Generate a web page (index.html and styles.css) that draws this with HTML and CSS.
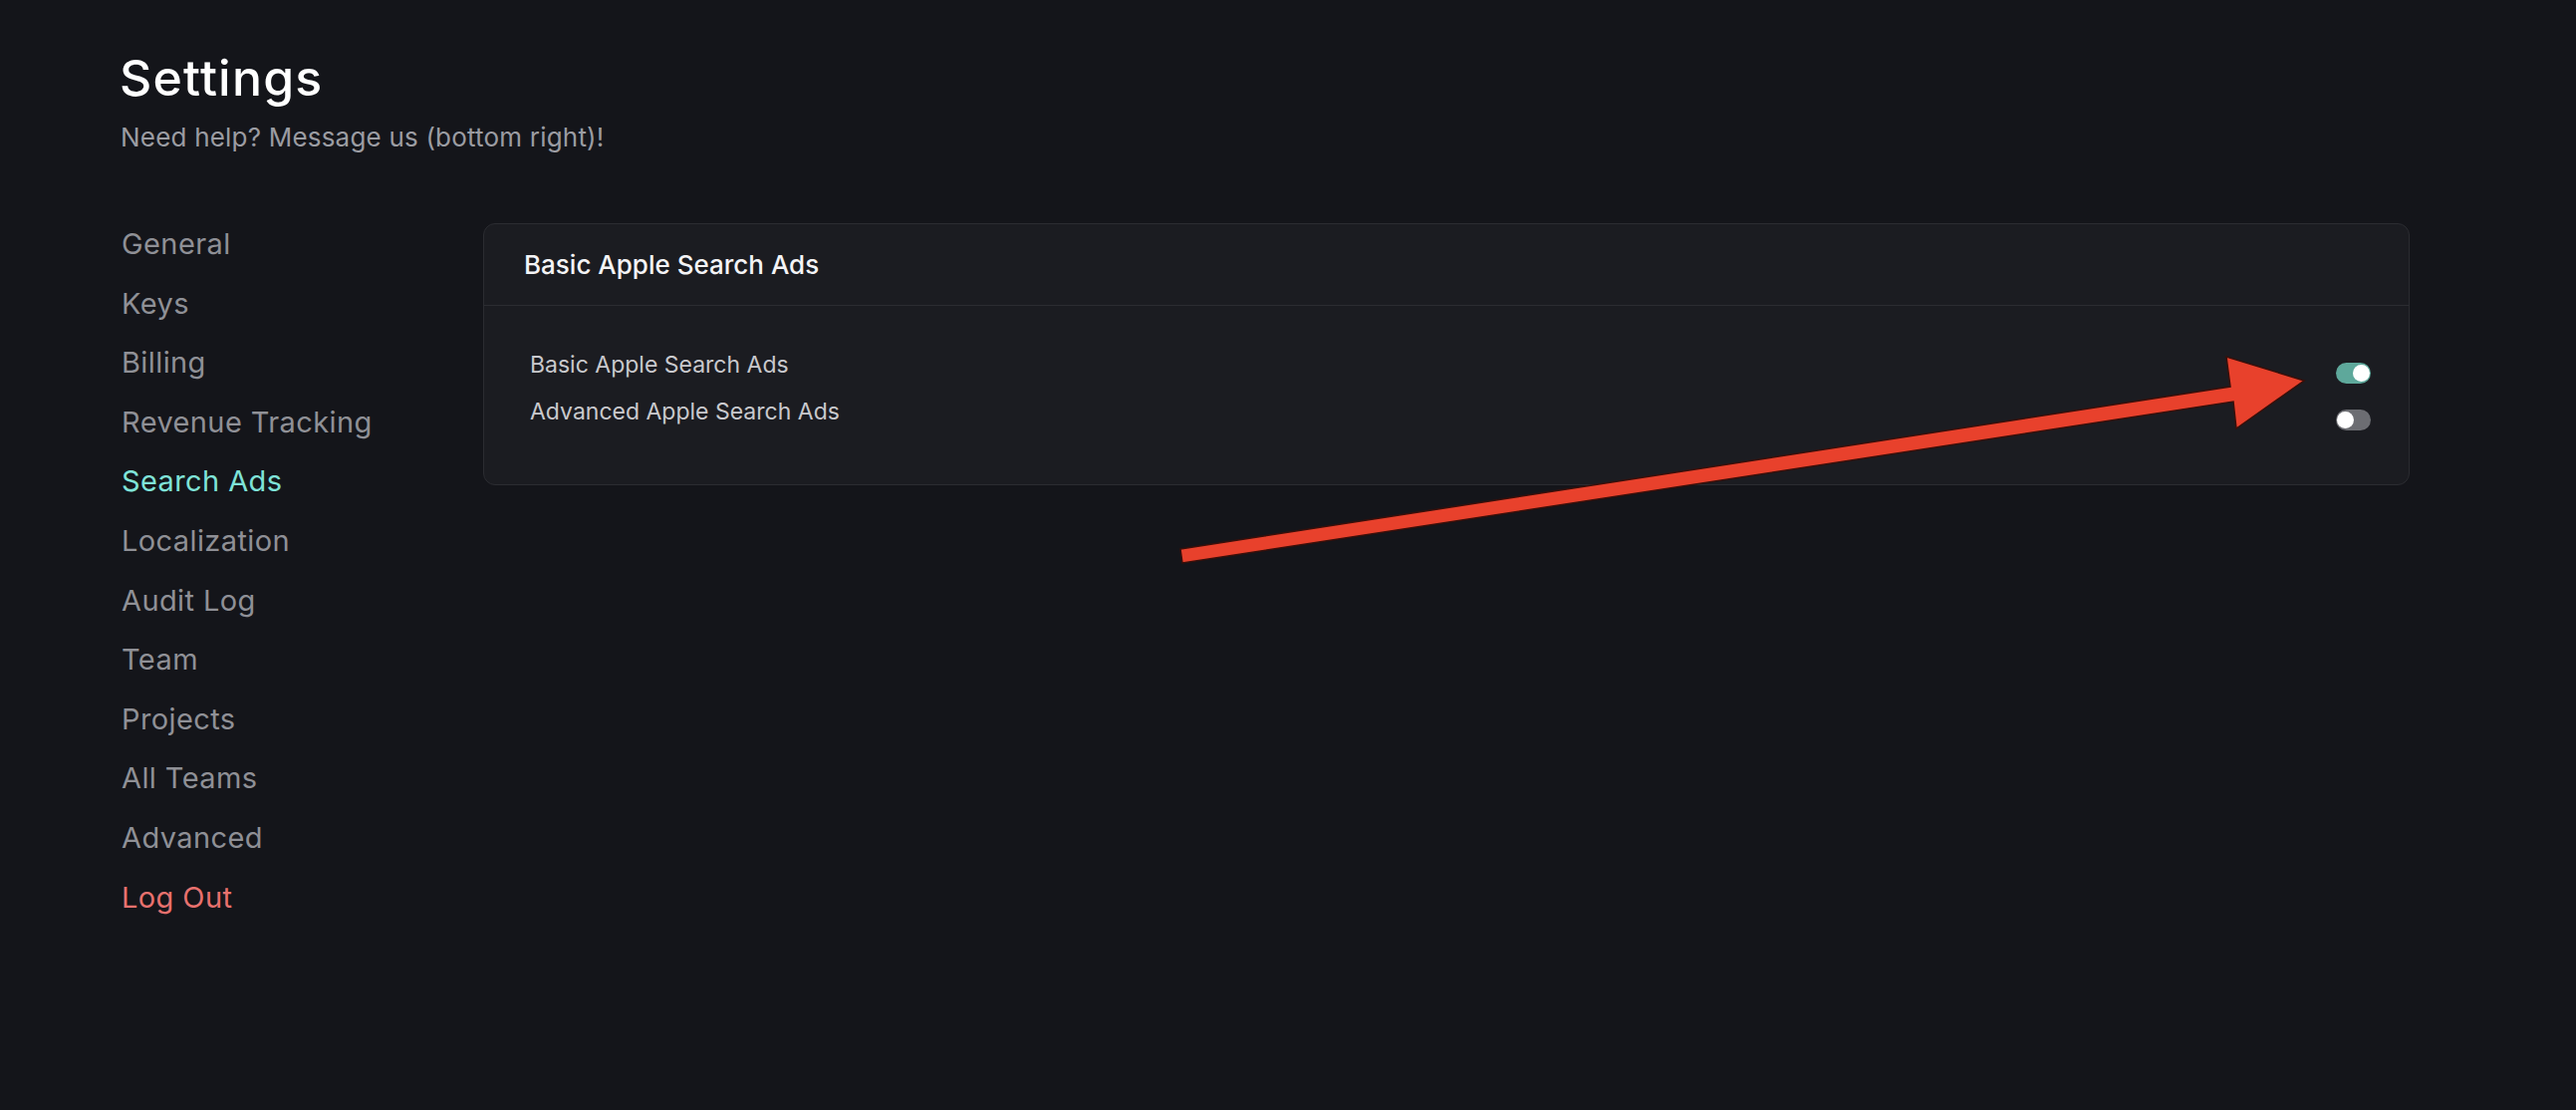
FILE: index.html
```html
<!DOCTYPE html>
<html lang="en">
<head>
<meta charset="utf-8">
<title>Settings</title>
<link rel="stylesheet" href="styles.css">
</head>
<body>
<div class="page">
  <header class="page-head">
    <h1 class="title">Settings</h1>
    <p class="subtitle">Need help? Message us (bottom right)!</p>
  </header>
  <div class="layout">
    <nav class="side-nav">
      <a class="nav-item">General</a>
      <a class="nav-item">Keys</a>
      <a class="nav-item">Billing</a>
      <a class="nav-item">Revenue Tracking</a>
      <a class="nav-item active">Search Ads</a>
      <a class="nav-item">Localization</a>
      <a class="nav-item">Audit Log</a>
      <a class="nav-item">Team</a>
      <a class="nav-item">Projects</a>
      <a class="nav-item">All Teams</a>
      <a class="nav-item">Advanced</a>
      <a class="nav-item logout">Log Out</a>
    </nav>
    <section class="card">
      <div class="card-head">Basic Apple Search Ads</div>
      <div class="card-body">
        <div class="row">
          <span class="row-label">Basic Apple Search Ads</span>
          <span class="toggle on"><span class="knob"></span></span>
        </div>
        <div class="row">
          <span class="row-label">Advanced Apple Search Ads</span>
          <span class="toggle"><span class="knob"></span></span>
        </div>
      </div>
    </section>
  </div>
</div>
<svg class="annotation" width="2586" height="1114" viewBox="0 0 2586 1114">
  <polygon points="1185,551 2239,388 2235,358 2313,382 2245,430 2242,403 1187,565" fill="#e8412c" stroke="#3a0f0a" stroke-width="1.5" stroke-linejoin="miter"/>
</svg>
</body>
</html>
```

FILE: styles.css
```css
* { box-sizing: border-box; }
html, body {
  margin: 0;
  padding: 0;
  background: #14151a;
  font-family: Inter, "Noto Sans", "Liberation Sans", sans-serif;
  color: #fff;
}
.page {
  padding: 50px 167px 0 122px;
}
.page-head {
  margin: 0;
}
.title {
  margin: 0;
  font-size: 50px;
  font-weight: 500;
  line-height: 56px;
  color: #ffffff;
  letter-spacing: 1.2px;
  margin-left: -2px;
}
.subtitle {
  margin: 15px 0 0 0;
  font-size: 26px;
  line-height: 34px;
  color: #9b9ca2;
  letter-spacing: 0.2px;
  margin-left: -1px;
}
.layout {
  display: grid;
  grid-template-columns: 363px 1fr;
  margin-top: 56px;
  align-items: start;
}
.side-nav {
  display: flex;
  flex-direction: column;
  padding-top: 4px;
}
.nav-item {
  display: block;
  font-size: 29px;
  line-height: 59.6px;
  letter-spacing: 0.4px;
  color: #8f9096;
  text-decoration: none;
}
.nav-item.active { color: #7fe3d8; }
.nav-item.logout { color: #e8716e; }
.card {
  margin-top: 13px;
  background: #1b1c21;
  border: 1px solid #2b2c31;
  border-radius: 12px;
}
.card-head {
  height: 82px;
  display: flex;
  align-items: center;
  padding: 0 40px;
  font-size: 26px;
  font-weight: 500;
  color: #f4f4f6;
  border-bottom: 1px solid #2b2c31;
}
.card-body {
  padding: 44px 38px 50px 46px;
  display: flex;
  flex-direction: column;
  gap: 9px;
}
.row {
  display: flex;
  justify-content: space-between;
  align-items: flex-start;
  height: 38px;
}
.row-label {
  font-size: 23px;
  line-height: 30px;
  color: #c9c9cd;
}
.toggle {
  position: relative;
  width: 35px;
  height: 21px;
  border-radius: 11px;
  background: #6c6d72;
  margin-top: 13px;
}
.toggle.on { background: #5ea89b; }
.knob {
  position: absolute;
  top: 2px;
  left: 1px;
  width: 17px;
  height: 17px;
  border-radius: 50%;
  background: #ffffff;
}
.toggle.on .knob { left: 17px; }
.annotation {
  position: absolute;
  left: 0;
  top: 0;
  pointer-events: none;
}
```
